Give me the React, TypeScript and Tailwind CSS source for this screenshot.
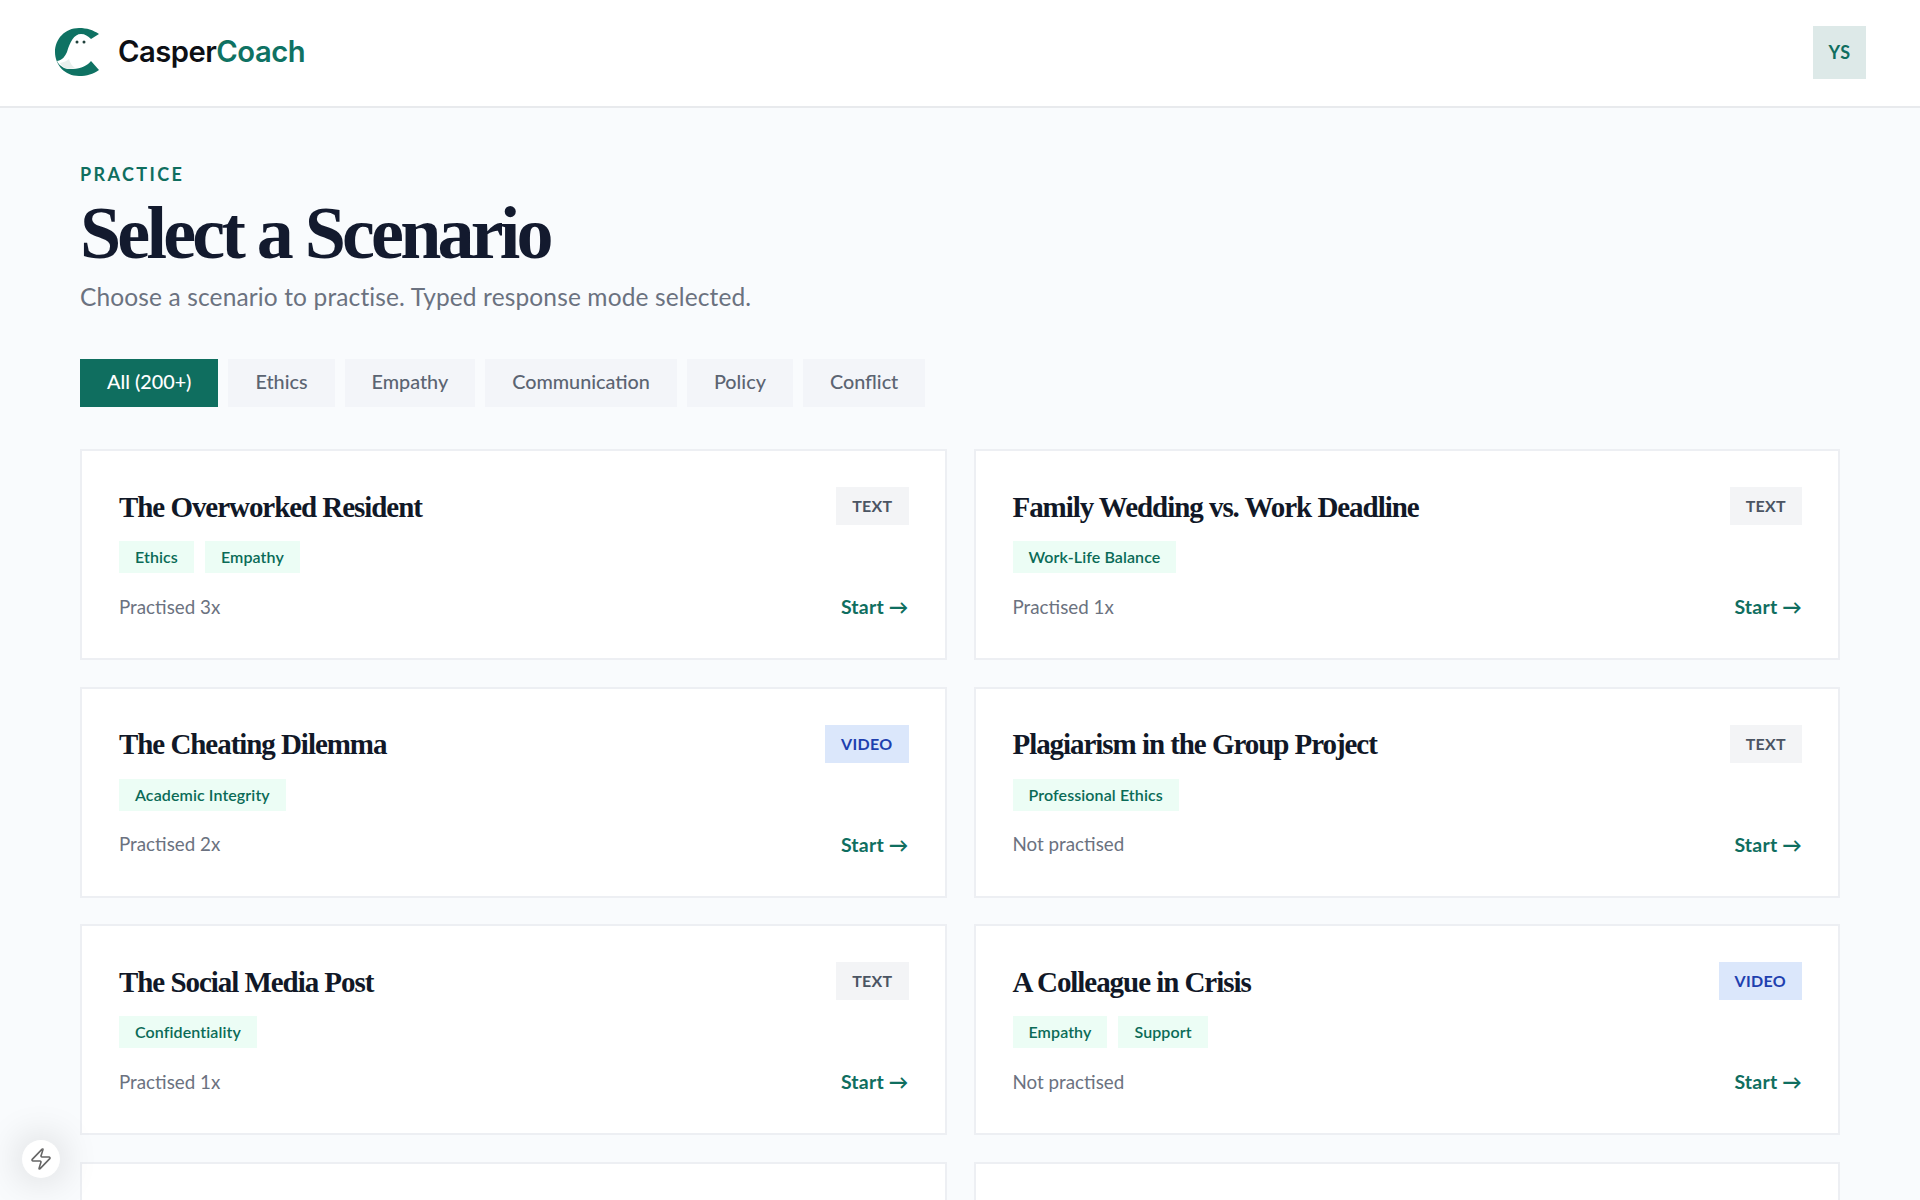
import { Zap } from "lucide-react";

const SANS = "font-['Lato','Liberation_Sans',sans-serif]";
const SERIF = "font-['Liberation_Serif','Noto_Serif',serif]";

const FILTERS = ["All (200+)", "Ethics", "Empathy", "Communication", "Policy", "Conflict"];

interface Scenario {
  title: string;
  mode: "TEXT" | "VIDEO";
  tags: string[];
  status: string;
}

const SCENARIOS: Scenario[] = [
  { title: "The Overworked Resident", mode: "TEXT", tags: ["Ethics", "Empathy"], status: "Practised 3x" },
  { title: "Family Wedding vs. Work Deadline", mode: "TEXT", tags: ["Work-Life Balance"], status: "Practised 1x" },
  { title: "The Cheating Dilemma", mode: "VIDEO", tags: ["Academic Integrity"], status: "Practised 2x" },
  { title: "Plagiarism in the Group Project", mode: "TEXT", tags: ["Professional Ethics"], status: "Not practised" },
  { title: "The Social Media Post", mode: "TEXT", tags: ["Confidentiality"], status: "Practised 1x" },
  { title: "A Colleague in Crisis", mode: "VIDEO", tags: ["Empathy", "Support"], status: "Not practised" },
];

const Logo = () => (
  <svg width="45" height="48" viewBox="0 0 45 48" className="shrink-0">
    <path
      d="M44 6 C38 2 32 0 24 0 C10 0 0 11 0 24 C0 37 10 48 24 48 C32 48 38 46 44 42 L36 33 C33 37 26 41 18 41 C14 41 11 41 9 40 C6 38 3 36 2 33 C8 32 10 28 12 24 C15 14 19 6 26 6 C30 6 33 8 36 11 Z"
      fill="#0f7263"
    />
    <path d="M5 35 C9 34 12 33 14 31 C15 35 17 38 20 40 C16 41 12 41 10 40 C8 39 6 37 5 35 Z" fill="#e9efed" />
    <circle cx="22" cy="14" r="1.5" fill="#20413b" />
    <circle cx="29" cy="14" r="1.5" fill="#20413b" />
  </svg>
);

const ScenarioCard = ({ scenario }: { scenario: Scenario }) => (
  <div className="h-[211px] border-2 border-[#edeff3] bg-white pt-[36px] pr-[36px] pl-[37px]">
    <div className="flex h-[38px] items-center justify-between">
      <h2 className={`${SERIF} pt-[3px] text-[29px] font-bold tracking-[-1.05px] text-[#111827]`}>{scenario.title}</h2>
      <span
        className={`flex h-[38px] items-center px-[16px] text-[16px] font-bold tracking-[0.3px] ${
          scenario.mode === "VIDEO" ? "bg-[#dbe7fb] text-[#1e40af]" : "bg-[#f3f4f6] text-[#4b5563]"
        }`}
      >
        {scenario.mode}
      </span>
    </div>
    <div className="mt-[16px] flex gap-[11px]">
      {scenario.tags.map((tag) => (
        <span
          key={tag}
          className="flex h-[32px] items-center bg-[#ecfdf5] px-[16px] text-[16px] font-semibold tracking-[0.1px] text-[#0a6b57]"
        >
          {tag}
        </span>
      ))}
    </div>
    <div className="mt-[18px] flex h-[32px] items-center justify-between">
      <span className="text-[18.8px] text-[#6b7280]">{scenario.status}</span>
      <span className="text-[19.5px] font-bold tracking-[0.2px] text-[#0f6e5f]">Start →</span>
    </div>
  </div>
);

export default function App() {
  return (
    <div className={`${SANS} relative h-[1200px] overflow-hidden bg-[#f9fbfd]`}>
      <header className="flex h-[108px] items-center justify-between border-b-2 border-[#e8eaed] bg-white pr-[54px] pb-[2px] pl-[55px]">
        <div className="flex items-center gap-[18px]">
          <Logo />
          <span className="font-['Inter',sans-serif] text-[29.2px] font-semibold tracking-[-0.5px] text-[#0d0f14]">
            Casper<span className="text-[#0f7263]">Coach</span>
          </span>
        </div>
        <div className="flex h-[53px] w-[53px] items-center justify-center bg-[#dde9e8] text-[18px] font-bold tracking-[0.4px] text-[#0f6e5f]">
          YS
        </div>
      </header>

      <main className="px-[80px] pt-[54px]">
        <p className="text-[18px] leading-[24px] font-bold tracking-[2.4px] text-[#0f6e5f]">PRACTICE</p>
        <h1 className={`${SERIF} mt-[5px] text-[74px] leading-[84px] font-bold tracking-[-3.8px] text-[#131a2e]`}>
          Select a Scenario
        </h1>
        <p className="mt-[6px] text-[24.5px] leading-[32px] tracking-[0.13px] text-[#6b7280]">
          Choose a scenario to practise. Typed response mode selected.
        </p>

        <div className="mt-[46px] flex gap-[10px]">
          {FILTERS.map((filter, i) => (
            <button
              key={filter}
              className={`h-[48px] px-[27px] pb-[2px] text-[19.8px] font-medium ${
                i === 0 ? "bg-[#0f6e5f] text-white" : "bg-[#f3f5f9] text-[#5b6472]"
              }`}
            >
              {filter}
            </button>
          ))}
        </div>

        <div className="mt-[42px] grid grid-cols-2 gap-x-[27px] gap-y-[26.5px]">
          {SCENARIOS.map((scenario) => (
            <ScenarioCard key={scenario.title} scenario={scenario} />
          ))}
          <div className="h-[211px] border-2 border-[#edeff3] bg-white" />
          <div className="h-[211px] border-2 border-[#edeff3] bg-white" />
        </div>
      </main>

      <button className="absolute bottom-[22px] left-[22px] flex h-[38px] w-[38px] items-center justify-center rounded-full bg-white shadow-[0_0_40px_rgba(0,0,0,0.2)]">
        <Zap size={24} strokeWidth={1.6} className="text-[#666]" />
      </button>
    </div>
  );
}
